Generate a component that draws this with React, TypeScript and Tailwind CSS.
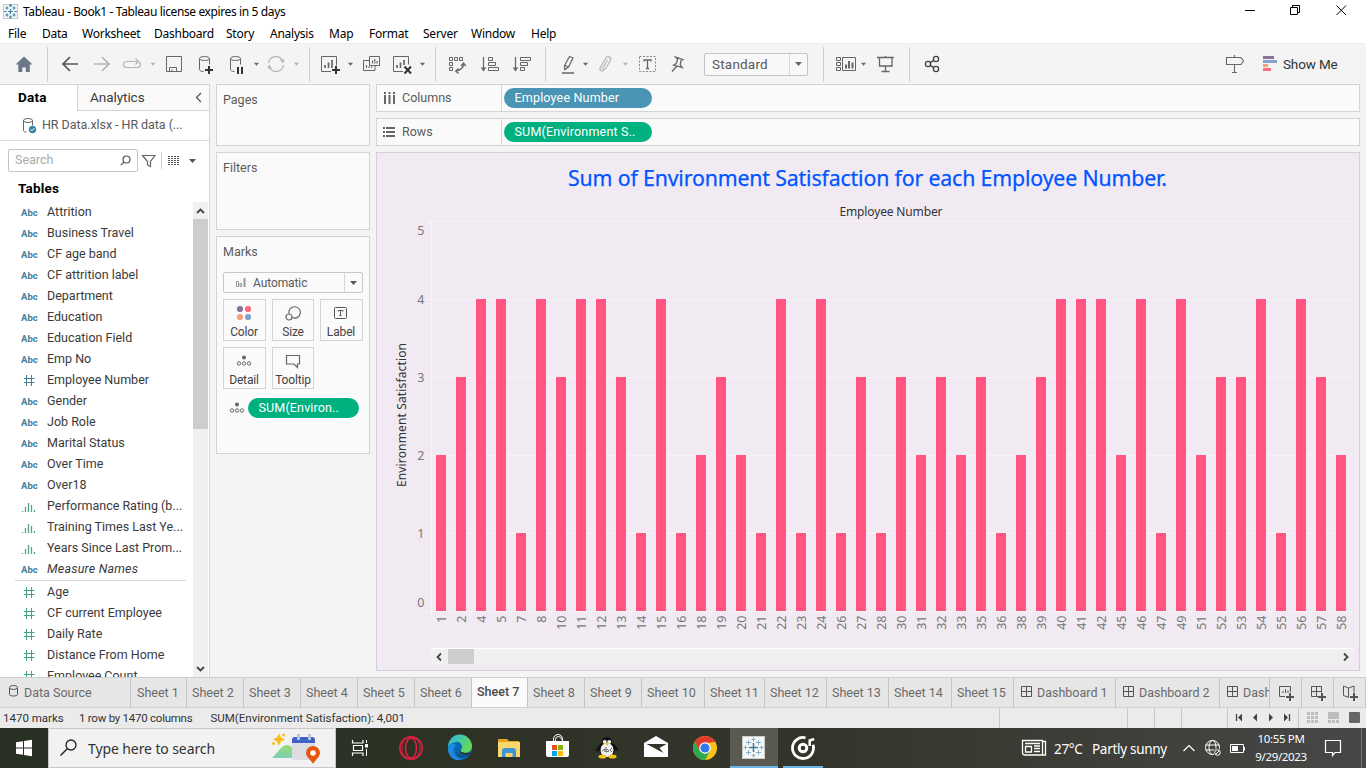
import React from 'react';

type IcoProps = { x: number; w: number; y?: number; h?: number; c?: string; children?: React.ReactNode };

/* Icon slot: the drawing inside uses window coordinates, the slot itself flows in its bar. */
function Ico({ x, w, y = 44, h = 40, c = '#666', children }: IcoProps) {
  return (
    <svg className="block shrink-0" width={w} height={h} viewBox={`${x} ${y} ${w} ${h}`} fill="none" stroke={c} strokeWidth="1">
      {children}
    </svg>
  );
}

const Caret = ({ x, y = 64, c = '#666' }: { x: number; y?: number; c?: string }) => (
  <path d={`M${x - 2.5} ${y - 1.2}h5l-2.500 3z`} fill={c} stroke="none" />
);

const Sep = () => <div className="h-[35px] w-px shrink-0 bg-[#d0d0d0]" />;

const menus: [string, string][] = [
  ['File', 'w-[34px]'], ['Data', 'w-[40px]'], ['Worksheet', 'w-[72px]'], ['Dashboard', 'w-[72px]'], ['Story', 'w-[44px]'],
  ['Analysis', 'w-[59px]'], ['Map', 'w-[40px]'], ['Format', 'w-[54px]'], ['Server', 'w-[48px]'], ['Window', 'w-[60px]'], ['Help', 'w-[40px]'],
];

function TitleBar() {
  return (
    <div className="flex h-[23px] bg-white pl-[3px]">
      <Ico x={3} y={0} w={20} h={23}>
        <rect x="3.500" y="4.500" width="14" height="14" fill="#f5f5f5" stroke="#c8c8c8" />
        <g stroke="#3f86a8" strokeWidth="1.200">
          <path d="M8 11.500h5M10.500 9v5M9 5.500h3M10.500 4v3M9 17h3M10.500 15.500v3M4 11.500h2.500M14.500 11.500h2.500M5.500 8h3M7 6.500v3M12.500 8h3M14 6.500v3M5.500 15h3M7 13.500v3M12.500 15h3M14 13.500v3" />
        </g>
      </Ico>
      <span className="font-[Noto_Sans] text-[12px] leading-[24px] tracking-[-0.38px] whitespace-nowrap text-black">Tableau - Book1 - Tableau license expires in 5 days</span>
      <div className="flex-1" />
      <Ico x={1236} y={0} w={130} h={23} c="#000">
        <path d="M1245 10.500h10M1290.500 7.500h7v7h-7zM1292.500 7.500v-2h7v7h-2M1336.500 5.500l9.500 9.500M1346 5.500l-9.500 9.500" />
      </Ico>
    </div>
  );
}

function MenuBar() {
  return (
    <div className="flex h-5 bg-white pl-2 font-[Noto_Sans] text-[12px] leading-[21px] tracking-[-0.24px] text-black">
      {menus.map(([m, w]) => <span key={m} className={`${w} whitespace-nowrap`}>{m}</span>)}
    </div>
  );
}

const Plus = ({ x, y = 70 }: { x: number; y?: number }) => <path d={`M${x - 4} ${y}h8M${x} ${y - 4}v8`} stroke="#333" strokeWidth="2" />;

const Cyl = ({ x }: { x: number }) => (
  <>
    <ellipse cx={x + 5} cy="58.500" rx="5" ry="2" />
    <path d={`M${x} 58.500v11c0 1 1.500 2 4 2M${x + 10} 58.500v6`} />
  </>
);

function Toolbar() {
  return (
    <div className="flex h-[41px] items-center border-t border-[#ececec] bg-[#f4f4f4]">
      <Ico x={0} w={47}><path d="M24 56.500l-8.500 8h2.800V72h4v-4.500h3.500V72h4v-7.500h2.800z" fill="#6b7887" stroke="none" /></Ico>
      <Sep />
      <Ico x={48} w={40} c="#555"><path d="M78 64H63M70 57l-7 7 7 7" strokeWidth="1.700" /></Ico>
      <Ico x={88} w={28} c="#b4b4b4"><path d="M94 64h15M102 57l7 7-7 7" strokeWidth="1.700" /></Ico>
      <Ico x={116} w={42} c="#b4b4b4">
        <path d="M132 61.500h-5.500a3 3 0 0 0 0 6h11a3 3 0 0 0 1.500-5.600M130 61.500h8M135.500 58.500l3 3-3 3" strokeWidth="1.200" /><Caret x={153} c="#b4b4b4" />
      </Ico>
      <Ico x={158} w={32}><path d="M166.500 56.500h15v15h-15zM169.500 71.500v-4h7v4M172 69.500v2" /></Ico>
      <Ico x={190} w={30}><Cyl x={199.5} /><Plus x={209} /></Ico>
      <Ico x={220} w={42}><Cyl x={230.5} /><path d="M238 67v7M242 67v7" stroke="#333" strokeWidth="2" /><Caret x={256.5} /></Ico>
      <Ico x={262} w={47} c="#b4b4b4">
        <path d="M268.500 63a7.500 7.500 0 0 1 14-2.500M283.500 65a7.500 7.500 0 0 1-14 2.500" strokeWidth="1.200" />
        <path d="M280 59.500h4.500l-1.500 4zM272 68.500h-4.500l1.500-4z" fill="#b4b4b4" stroke="none" /><Caret x={296.5} c="#b4b4b4" />
      </Ico>
      <Sep />
      <Ico x={310} w={44}>
        <path d="M331 71.500h-9.500v-15h15v9" /><path d="M325 68v-3M328.500 68v-5.500M332 68v-8" strokeWidth="1.700" /><Plus x={336} /><Caret x={350.5} />
      </Ico>
      <Ico x={354} w={34}>
        <path d="M369.500 60.500h-6v10h11.500v-4.500M369.500 56.500h10v9h-10z" /><path d="M366.500 68v-3M369 68v-2M371.500 68v-1.500M372.500 63.500v-3M374.800 63.500v-4.500M377 63.500v-2.500" strokeWidth="1.100" />
      </Ico>
      <Ico x={388} w={47}>
        <path d="M403 71.500h-9.500v-15h15v8" /><path d="M397 68v-3M400.500 68v-5.500M404 65v-5" strokeWidth="1.700" /><path d="M404.500 66.500l6.500 7M411 66.500l-6.500 7" stroke="#333" strokeWidth="2" /><Caret x={422.5} />
      </Ico>
      <Sep />
      <Ico x={436} w={38}>
        <path d="M449.500 57.500h3v3h-3zM454.500 57.500h3v3h-3zM459.500 57.500h3v3h-3zM449.500 62.500h3v3h-3zM449.500 67.500h3v3h-3z" /><path d="M463.500 63.500c.300 4-3 7-7.500 7.500M461 66l2.500-3 2.300 3M458.500 68.500l-2.800 2.700 3 2.300" strokeWidth="1.300" />
      </Ico>
      <Ico x={474} w={32}>
        <path d="M483.500 57v13" strokeWidth="1.200" /><path d="M480.700 67.500h5.600l-2.800 4z" fill="#666" stroke="none" /><path d="M488.500 57.500h4v3h-4zM488.500 62.500h7v3h-7zM488.500 67.500h10v3h-10z" />
      </Ico>
      <Ico x={506} w={39}>
        <path d="M515.500 57v13" strokeWidth="1.200" /><path d="M512.700 67.500h5.600l-2.800 4z" fill="#666" stroke="none" /><path d="M520.500 57.500h10v3h-10zM520.500 62.500h7v3h-7zM520.500 67.500h4v3h-4z" />
      </Ico>
      <Sep />
      <Ico x={546} w={46}>
        <path d="M569.500 56.500l3.500 1.500-4.500 9-3.500 2.500-.500-4zM565 65.500l3.500 1.500" strokeWidth="1.200" /><path d="M564 69.500l1.500-.500M562 73h12" strokeWidth="1.700" /><Caret x={585.5} />
      </Ico>
      <Ico x={592} w={40} c="#b4b4b4">
        <path d="M607.500 60l-4.500 7.500c-1 2 1.200 3 2.200 1.500l5-8c1.800-3.500-2.500-6-4.700-2.500l-5 8.500c-1.700 3.200 1.500 5.500 3.500 3" strokeWidth="1.200" /><Caret x={625.5} c="#b4b4b4" />
      </Ico>
      <Ico x={632} w={32}>
        <rect x="639.500" y="56.500" width="16" height="15" strokeDasharray="2 1.500" stroke="#888" /><path d="M644 61.500v-1.500h7v1.500M647.500 60v8.500M646 68.500h3" strokeWidth="1.300" />
      </Ico>
      <Ico x={664} w={40}>
        <path d="M675.500 57l7.500 2.500-2 1-.800 4 2 3-8.500-2.500 2.500-1.500 1.500-4zM676.500 66.500l-4.500 5" strokeWidth="1.300" />
      </Ico>
      <div className="flex h-[23px] w-[104px] items-center rounded-[2px] border border-[#c4c4c4] bg-[#f8f8f8]">
        <span className="w-[84px] pl-[7px] font-[Roboto] text-[13.5px] tracking-[0.2px] text-[#5a5a5a]">Standard</span>
        <div className="h-full w-px bg-[#d8d8d8]" />
        <svg className="ml-1" width="9" height="6" viewBox="0 0 9 6"><path d="M1 1h7L4.500 5z" fill="#666" /></svg>
      </div>
      <div className="w-[15px]" />
      <Sep />
      <Ico x={824} w={46}>
        <path d="M836.500 57.500h4v3h-4zM836.500 62.500h4v3h-4zM836.500 67.500h4v3h-4zM842.500 57.500h13v13h-13z" /><path d="M846 68.500v-4M849 68.500v-7.500M852.500 68.500v-6" strokeWidth="2" /><Caret x={863.5} />
      </Ico>
      <Ico x={870} w={39}>
        <path d="M877 57.500h17M885.500 56v2M879.500 57.500v8.500h12.500v-8.500M885.500 66v5.500M881.500 71.500h8" strokeWidth="1.300" />
      </Ico>
      <Sep />
      <Ico x={910} w={40} c="#444">
        <g strokeWidth="1.300"><circle cx="928" cy="64" r="2.600" /><circle cx="936" cy="59" r="2.600" /><circle cx="936" cy="69" r="2.600" /><path d="M930.200 62.600l3.600-2.200M930.200 65.400l3.600 2.200" /></g>
      </Ico>
      <div className="flex-1" />
      <Ico x={1222} w={38}><path d="M1226.500 57.500h14.500l2.500 3.500-2.500 3.500h-14.500zM1234.500 55v2.500M1234.500 64.500v8M1232 72.500h5" strokeWidth="1.100" /></Ico>
      <Ico x={1260} w={23} c="none">
        <path d="M1263 56h11v3h-11z" fill="#8b7297" /><path d="M1263 60h14v3h-14z" fill="#81a3cb" /><path d="M1263 64h5v3h-5z" fill="#f0a07c" /><path d="M1263 68h8v3h-8z" fill="#fb6b7f" />
      </Ico>
      <span className="w-[83px] font-[Roboto] text-[13.5px] tracking-[-0.15px] text-[#333]">Show Me</span>
    </div>
  );
}

const dims: [string, string][] = [
  ['abc', 'Attrition'], ['abc', 'Business Travel'], ['abc', 'CF age band'], ['abc', 'CF attrition label'], ['abc', 'Department'],
  ['abc', 'Education'], ['abc', 'Education Field'], ['abc', 'Emp No'], ['num', 'Employee Number'], ['abc', 'Gender'], ['abc', 'Job Role'],
  ['abc', 'Marital Status'], ['abc', 'Over Time'], ['abc', 'Over18'], ['bin', 'Performance Rating (b...'], ['bin', 'Training Times Last Ye...'],
  ['bin', 'Years Since Last Prom...'], ['abc', 'Measure Names'],
];
const measures = ['Age', 'CF current Employee', 'Daily Rate', 'Distance From Home', 'Employee Count'];

function FieldIcon({ kind, c }: { kind: string; c: string }) {
  if (kind === 'abc') return <span className="text-[9.5px] leading-[21px] font-bold text-[#42809a]">Abc</span>;
  if (kind === 'bin')
    return (
      <svg width="16" height="13" viewBox="0 0 16 13" stroke="#52a487"><path d="M1.500 11v1M4.500 7v5M7.500 3v9M10.500 5v7M13.500 10v2" strokeWidth="1.300" /></svg>
    );
  return (
    <svg width="16" height="13" viewBox="0 0 16 13" stroke={c}><path d="M5.500 1v11M10.500 1v11M3 4.500h10.500M3 8.500h10.500" /></svg>
  );
}

function Field({ kind, name, c }: { kind: string; name: string; c: string }) {
  return (
    <div className="flex h-[21px] shrink-0 items-center">
      <div className="flex w-[26px] shrink-0 items-center"><FieldIcon kind={kind} c={c} /></div>
      <span className={name === 'Measure Names' ? 'tracking-[0.2px] whitespace-nowrap italic' : 'whitespace-nowrap'}>{name}</span>
    </div>
  );
}

function DataPane() {
  return (
    <div className="flex h-full w-[210px] flex-col border-t border-r border-[#d4d4d4] bg-white font-[Roboto] text-[#3a3a3a]">
      <div className="flex h-[26px] shrink-0">
        <div className="w-[77px] pl-[18px] text-[13.5px] leading-[25px] font-bold tracking-[0.2px] text-black">Data</div>
        <div className="flex flex-1 items-center border-b border-l border-[#d4d4d4] bg-[#fafafa] pl-3 text-[13.5px] tracking-[-0.05px]">
          <span className="flex-1">Analytics</span>
          <svg className="mr-[7px]" width="7" height="11" viewBox="0 0 7 11" fill="none" stroke="#555" strokeWidth="1.300"><path d="M6 1L1.500 5.500 6 10" /></svg>
        </div>
      </div>
      <div className="flex h-[30px] shrink-0 items-center border-b border-[#dcdcdc] text-[12.5px] tracking-[-0.06px] text-[#5a5a5a]">
        <Ico x={0} y={111} w={42} h={29}>
          <ellipse cx="28" cy="120.500" rx="4.500" ry="2" /><path d="M23.500 120.500v10c0 1 1 1.500 3 1.500M32.500 120.500v5" />
          <circle cx="32.500" cy="129.500" r="3.700" fill="#3a83a4" stroke="none" /><path d="M30.700 129.500l1.300 1.300 2.300-2.600" stroke="#fff" />
        </Ico>
        HR Data.xlsx - HR data (...
      </div>
      <div className="flex h-[39px] shrink-0 items-center pl-2">
        <div className="flex h-[23px] w-[130px] items-center rounded-[2px] border border-[#c4c4c4] pl-1.5 text-[12.5px] text-[#aaa]">
          <span className="flex-1">Search</span>
          <svg className="mr-1.5" width="11" height="11" viewBox="0 0 11 11" fill="none" stroke="#555" strokeWidth="1.200"><circle cx="6.500" cy="4.500" r="3.500" /><path d="M4 7L.800 10.200" /></svg>
        </div>
        <Ico x={138} y={148} w={62} h={24}>
          <path d="M142.500 154.500h12.500l-4.500 6v5l-3 -1.500v-3.500z" strokeWidth="1.200" />
          <path d="M161.500 151v17" stroke="#d0d0d0" />
          <path d="M168 155.500h12M168 157.500h12M168 159.500h12M168 161.500h12M168 163.500h12" strokeDasharray="2 1" stroke="#555" />
          <path d="M189 158h7l-3.500 4z" fill="#555" stroke="none" />
        </Ico>
      </div>
      <div className="h-[22px] shrink-0 pl-[18px] text-[13.5px] leading-[17px] font-bold tracking-[0.2px] text-black">Tables</div>
      <div className="flex h-[475px] min-h-0">
        <div className="flex w-[193px] flex-col overflow-hidden text-[12.5px]">
          <div className="flex flex-col pl-[21px]">
            {dims.map(([k, n]) => <Field key={n} kind={k} name={n} c="#42809a" />)}
          </div>
          <div className="mr-[7px] ml-[15px] h-px shrink-0 bg-[#d8d8d8]" />
          <div className="flex flex-col pt-px pl-[21px]">
            {measures.map((n) => <Field key={n} kind="num" name={n} c="#3fa27f" />)}
          </div>
        </div>
        <div className="flex w-[15px] flex-col items-center justify-between bg-[#f0f0f0]">
          <svg width="15" height="17" viewBox="0 0 15 17" fill="none" stroke="#444" strokeWidth="1.800"><path d="M4 11l3.500-3.500L11 11" /></svg>
          <div className="h-[210px] w-full bg-[#cdcdcd]" />
          <div className="flex-1" />
          <svg width="15" height="17" viewBox="0 0 15 17" fill="none" stroke="#444" strokeWidth="1.800"><path d="M4 7l3.500 3.500L11 7" /></svg>
        </div>
      </div>
    </div>
  );
}

const DetailDots = () => (
  <svg width="16" height="12" viewBox="0 0 16 12" fill="none" stroke="#666"><circle cx="8" cy="2.500" r="2" fill="#666" stroke="none" /><circle cx="3" cy="8.500" r="1.700" /><circle cx="8" cy="8.500" r="1.700" /><circle cx="13" cy="8.500" r="1.700" /></svg>
);

function MarkButton({ label, wide, children }: { label: string; wide?: boolean; children: React.ReactNode }) {
  return (
    <div className={`flex h-[42px] flex-col items-center border border-[#d4d4d4] ${wide ? 'w-[43px] pr-px' : 'w-[42px]'}`}>
      <div className="flex h-[26px] items-center">{children}</div>
      <span className="text-[12px] leading-[13px] tracking-[-0.15px] whitespace-nowrap text-[#444]">{label}</span>
    </div>
  );
}

function Cards() {
  return (
    <div className="ml-1.5 flex w-[154px] flex-col gap-1.5 font-[Roboto] text-[12.5px] text-[#5a5a5a]">
      <div className="h-[62px] border border-[#d4d4d4] bg-[#fafafa] pl-1.5 leading-[30px]">Pages</div>
      <div className="h-[78px] border border-[#d4d4d4] bg-[#fafafa] pl-1.5 leading-[30px]">Filters</div>
      <div className="h-[218px] border border-[#d4d4d4] bg-[#fafafa] px-1.5">
        <div className="h-[35px] leading-[30px]">Marks</div>
        <div className="flex h-[21px] items-center rounded-[2px] border border-[#c8c8c8]">
          <svg className="ml-[11px]" width="12" height="11" viewBox="0 0 12 11" fill="none" stroke="#999"><path d="M1.500 4.500h2v5h-2zM5 6.500h1.500v3H5z" /><path d="M9.500 1v9" strokeWidth="2" /></svg>
          <span className="ml-1.5 w-[91px] text-[12px] tracking-[-0.1px]">Automatic</span>
          <div className="h-full w-px bg-[#d4d4d4]" />
          <svg className="ml-1" width="9" height="6" viewBox="0 0 9 6"><path d="M1 1h7L4.500 5z" fill="#555" /></svg>
        </div>
        <div className="mt-1.5 flex justify-between">
          <MarkButton label="Color" wide>
            <svg width="16" height="16" viewBox="0 0 16 16"><circle cx="4" cy="4" r="3.100" fill="#8b7297" /><circle cx="12" cy="4" r="3.100" fill="#fb6b7f" /><circle cx="4" cy="12" r="3.100" fill="#f0a07c" /><circle cx="12" cy="12" r="3.100" fill="#81a3cb" /></svg>
          </MarkButton>
          <MarkButton label="Size">
            <svg width="16" height="16" viewBox="0 0 16 16" fill="none" stroke="#666" strokeWidth="1.200"><path d="M4 8.500A5.700 5.700 0 1 1 7 12.500" /><circle cx="4" cy="12" r="3" /></svg>
          </MarkButton>
          <MarkButton label="Label" wide>
            <svg width="14" height="14" viewBox="0 0 14 14" fill="none" stroke="#555"><rect x=".500" y="1.500" width="12" height="11" rx="1" /><path d="M4 5.500v-1h5v1M6.500 4.500v5M5.500 9.500h2" /></svg>
          </MarkButton>
        </div>
        <div className="mt-1.5 flex gap-1.5">
          <MarkButton label="Detail" wide><DetailDots /></MarkButton>
          <MarkButton label="Tooltip">
            <svg width="16" height="15" viewBox="0 0 16 15" fill="none" stroke="#666" strokeWidth="1.200"><path d="M1.500 1.500h13v8.500h-2v3.500L9 10H1.500z" /></svg>
          </MarkButton>
        </div>
        <div className="mt-[9px] flex items-center pl-1.5">
          <DetailDots />
          <div className="ml-[3px] h-5 w-[111px] rounded-full bg-[#00b180] pl-[10.5px] text-[12.5px] leading-5 tracking-[0.15px] text-white">SUM(Environ..</div>
        </div>
      </div>
    </div>
  );
}

const data: [number, number][] = [
  [1, 2], [2, 3], [4, 4], [5, 4], [7, 1], [8, 4], [10, 3], [11, 4], [12, 4], [13, 3], [14, 1], [15, 4], [16, 1], [18, 2], [19, 3], [20, 2],
  [21, 1], [22, 4], [23, 1], [24, 4], [26, 1], [27, 3], [28, 1], [30, 3], [31, 2], [32, 3], [33, 2], [35, 3], [36, 1], [38, 2], [39, 3],
  [40, 4], [41, 4], [42, 4], [45, 2], [46, 4], [47, 1], [49, 4], [51, 2], [52, 3], [53, 3], [54, 4], [55, 1], [56, 4], [57, 3], [58, 2],
];

function Viz() {
  return (
    <div className="flex h-[519px] flex-col border border-[#d4d0d8] bg-[#f2eaf3]">
      <svg className="block" width="982" height="495" viewBox="377 153 982 495" fontFamily="'Noto Sans', sans-serif">
        <text x="568" y="186" fontSize="21.300" fill="#0055ff" stroke="#0055ff" strokeWidth=".25" textLength="599">Sum of Environment Satisfaction for each Employee Number.</text>
        <text x="839.500" y="216" fontSize="12" fill="#333" textLength="103">Employee Number</text>
        <text transform="translate(406 487) rotate(-90)" fontSize="12" fill="#333" textLength="144">Environment Satisfaction</text>
        {[0, 1, 2, 3, 4, 5].map((v) => (
          <g key={v}>
            <path d={`M426 ${611.5 - 78 * v}H1351`} stroke="#f7f2f8" />
            <text x="424.500" y={v === 0 ? 607 : v === 5 ? 235 : 615.5 - 78 * v} fontSize="12.500" fill="#777" textAnchor="end">{v}</text>
          </g>
        ))}
        <path d="M431.500 221v393" stroke="#f9f6fa" />
        {data.map(([n, v], i) => (
          <g key={n}>
            <path d={`M${451.5 + 20 * i} 611v3`} stroke="#f9f6fa" />
            <rect x={436 + 20 * i} y={611 - 78 * v} width="10" height={78 * v} fill="#ff5580" />
            <text transform={`translate(${446 + 20 * i} 615.5) rotate(-90)`} fontSize="12.500" fill="#777" textAnchor="end">{n}</text>
          </g>
        ))}
      </svg>
      <div className="mr-[5px] ml-[54px] flex h-[17px] border-t border-white bg-[#f0f0f0]">
        <svg width="17" height="16" viewBox="0 0 17 16" fill="none" stroke="#444" strokeWidth="1.800"><path d="M10 4.500L6.500 8l3.500 3.500" /></svg>
        <div className="h-[15px] w-[26px] bg-[#cdcdcd]" />
        <div className="flex-1" />
        <svg width="17" height="16" viewBox="0 0 17 16" fill="none" stroke="#444" strokeWidth="1.800"><path d="M7 4.500L10.500 8 7 11.500" /></svg>
      </div>
    </div>
  );
}

function Shelf({ label, pill, color, children }: { label: string; pill: string; color: string; children: React.ReactNode }) {
  return (
    <div className="flex h-7 border border-[#d4d4d4] bg-[#fafafa] font-[Roboto] text-[12.5px] text-[#5a5a5a]">
      <div className="flex w-[125px] items-center border-r border-[#d4d4d4] pl-1.5">
        <svg className="mr-[7px]" width="12" height="12" viewBox="0 0 12 12" stroke="#666" strokeWidth="2">{children}</svg>
        {label}
      </div>
      <div className={`mt-[3px] ml-0.5 h-5 w-[148px] rounded-full pl-[10.5px] text-[12.5px] leading-5 tracking-[0.18px] text-white ${color}`}>{pill}</div>
    </div>
  );
}

const sheets: [string, string][] = [
  ['Sheet 1', 'w-[56px] pl-[6px]'], ['Sheet 2', 'w-[57px] pl-[5px]'], ['Sheet 3', 'w-[57px] pl-[5px]'], ['Sheet 4', 'w-[57px] pl-[5px]'],
  ['Sheet 5', 'w-[57px] pl-[5px]'], ['Sheet 6', 'w-[57px] pl-[5px]'], ['Sheet 7', 'w-[56px] pl-[5px]'], ['Sheet 8', 'w-[57px] pl-[5px]'],
  ['Sheet 9', 'w-[57px] pl-[5px]'], ['Sheet 10', 'w-[63px] pl-[5px]'], ['Sheet 11', 'w-[60px] pl-[5px]'], ['Sheet 12', 'w-[62px] pl-[5px]'],
  ['Sheet 13', 'w-[62px] pl-[5px]'], ['Sheet 14', 'w-[63px] pl-[5px]'], ['Sheet 15', 'w-[62px] pl-[5px]'],
];
const dashboards: [string, string][] = [['Dashboard 1', 'w-[102px]'], ['Dashboard 2', 'w-[104px]'], ['Dashboard 3', 'w-[50px]']];

function SheetTabs() {
  return (
    <div className="flex h-[31px] border-y border-[#cfcfcf] bg-[#e6e6e6] font-[Roboto] text-[12.5px] leading-[30px] whitespace-nowrap text-[#6a6a6a]">
      <div className="flex w-[131px] border-r border-[#c4c4c4] pl-2">
        <svg className="mt-[6px] mr-[5px]" width="11" height="14" viewBox="0 0 11 14" fill="none" stroke="#555"><ellipse cx="5.500" cy="3.500" rx="4" ry="2" /><path d="M1.500 3.500v7c0 2 8 2 8 0v-7" /></svg>
        Data Source
      </div>
      {sheets.map(([s, w]) => (
        <div key={s} className={`${w} shrink-0 border-r border-[#c4c4c4] ${s === 'Sheet 7' ? 'bg-[#fafafa] leading-[28px] font-medium text-[#4a4a4a]' : ''}`}>{s}</div>
      ))}
      {dashboards.map(([s, w]) => (
        <div key={s} className={`${w} flex shrink-0 overflow-hidden border-r border-[#c4c4c4] pl-[7px]`}>
          <svg className="mt-2 mr-[5px] shrink-0" width="11" height="11" viewBox="0 0 11 11" fill="none" stroke="#555"><path d="M.500.500h10v10H.500zM5.500.500v10M.500 5.500h10" /></svg>
          {s}
        </div>
      ))}
      <div className="w-8 border-r border-[#c4c4c4]"><Ico x={1270} y={678} w={31} h={29} c="#555"><path d="M1285 696.500h-5.500v-10h11v5.500M1283 693v-2M1285.500 693v-4M1288 693v-2.500" /><path d="M1286 697h8M1290 693v8" strokeWidth="2" /></Ico></div>
      <div className="w-8 border-r border-[#c4c4c4]"><Ico x={1302} y={678} w={31} h={29} c="#555"><path d="M1318 696.500h-6.500v-10h10v6M1316.500 686.500v10M1311.500 691.500h10" /><path d="M1318 697h8M1322 693v8" strokeWidth="2" /></Ico></div>
      <div className="w-8 border-r border-[#c4c4c4]"><Ico x={1334} y={678} w={31} h={29} c="#555"><path d="M1349 697.500l-5.500-2v-9.500l5 2 5.500-2v6.500M1348.500 688v9" /><path d="M1350 697h8M1354 693v8" strokeWidth="2" /></Ico></div>
    </div>
  );
}

function StatusBar() {
  return (
    <div className="flex h-5 bg-[#ebebeb] font-[Roboto] text-[11.5px] leading-[21px] whitespace-nowrap text-[#333]">
      <span className="w-[76px] pl-[3px]">1470 marks</span>
      <span className="w-[132px] pl-[3px] tracking-[-0.25px]">1 row by 1470 columns</span>
      <span className="pl-[2.5px]">SUM(Environment Satisfaction): 4,001</span>
      <div className="flex-1" />
      <div className="w-[128px] border-l border-[#c8c8c8]" />
      <div className="w-[27px] border-l border-[#c8c8c8]" />
      <div className="w-[27px] border-l border-[#c8c8c8]" />
      <div className="w-[46px] border-l border-[#c8c8c8]" />
      <div className="flex border-l border-[#c8c8c8]">
        <Ico x={1228} y={708} w={70} h={20} c="#444">
          <path d="M1236.500 714v7M1289.500 714v7" strokeWidth="1.300" />
          <path d="M1242 713.500v8l-4-4zM1257 713.500v8l-4-4zM1269 713.500v8l4-4zM1284 713.500v8l4-4z" fill="#444" stroke="none" />
        </Ico>
      </div>
      <div className="flex border-l border-[#c8c8c8]">
        <Ico x={1299} y={708} w={67} h={20} c="none">
          <path d="M1307 712h3v3h-3zM1311 712h3v3h-3zM1315 712h3v3h-3zM1307 716h3v3h-3zM1311 716h3v3h-3zM1315 716h3v3h-3zM1307 720h3v3h-3zM1311 720h3v3h-3zM1315 720h3v3h-3zM1328 712h11v7h-11zM1328 720h3v3h-3zM1332 720h3v3h-3zM1336 720h3v3h-3z" fill="#bdbdbd" />
          <rect x="1349" y="712" width="11" height="11" rx="1" fill="#666" />
        </Ico>
      </div>
    </div>
  );
}

function TIco(p: { x: number; w: number; children?: React.ReactNode }) {
  return <Ico x={p.x} w={p.w} y={728} h={40} c="#fff">{p.children}</Ico>;
}

function Taskbar() {
  return (
    <div className="flex h-10 items-center bg-linear-to-r from-[#262f21] via-[#34352a] via-60% to-[#474747] font-[Noto_Sans] text-white">
      <TIco x={0} w={48}><path d="M16 742.200l7-1v6.300h-7zM24 741l8-1.200v7.700h-8zM16 748.500h7v6.300l-7-1zM24 748.500h8v7.700l-8-1.200z" fill="#fff" stroke="none" /></TIco>
      <div className="flex h-10 w-[288px] items-center border border-[#c8c8c8] bg-[#f2f2f2] text-[14px] tracking-[-0.1px] text-[#333]">
        <Ico x={49} y={729} w={39} h={38} c="#222"><circle cx="71" cy="745" r="5" strokeWidth="1.300" /><path d="M67.500 748.500l-7 7" strokeWidth="1.400" /></Ico>
        <span className="w-[174px] pt-px whitespace-nowrap">Type here to search</span>
        <Ico x={262} y={729} w={72} h={38} c="none">
          <defs><linearGradient id="hill" x1="0" y1="0" x2="0" y2="1"><stop offset="0" stopColor="#98dc72" /><stop offset="1" stopColor="#7dd0b4" /></linearGradient></defs>
          <path d="M272 758c4-3 9-13 15-13 5 0 8 8 10 13z" fill="url(#hill)" />
          <rect x="292" y="737" width="23" height="23" rx="3" fill="#dcdce2" />
          <path d="M292 743v-3q0-3 3-3h17q3 0 3 3v3z" fill="#3f62c8" /><path d="M297 734h3v6h-3zM308 734h3v6h-3z" fill="#b8c4e0" />
          <path d="M279 733.500l2 4 4 2-4 2-2 4-2-4-4-2 4-2z" fill="#fbbc1a" /><circle cx="283.500" cy="735" r="1.500" fill="#fbbc1a" /><circle cx="273.500" cy="743.500" r="1.500" fill="#fbbc1a" />
          <path d="M313 764c-2-4-7-7-7-11a7 7 0 0 1 14 0c0 4-5 7-7 11z" fill="#e8560e" /><circle cx="313" cy="753" r="2.800" fill="#fff" />
        </Ico>
      </div>
      <TIco x={336} w={48}>
        <path d="M352.500 740v3h10.500v-3M352.500 756v-3h10.500v3M353.500 745.500h9v5h-9z" strokeWidth="1.200" /><path d="M366.500 740v3M366.500 749v7" /><path d="M365 744h3v3.500h-3z" fill="#fff" stroke="none" />
      </TIco>
      <TIco x={384} w={50}><g stroke="#e0203f" strokeWidth="1.500"><circle cx="411" cy="748" r="11.200" /><ellipse cx="411" cy="748" rx="5.500" ry="10" /><path d="M414 738c8 2 8 18 0 20M408 738c-8 2-8 18 0 20" strokeWidth="1" /></g></TIco>
      <TIco x={434} w={50}>
        <defs><linearGradient id="edge" x1="0" y1="0" x2="1" y2="0.500"><stop offset="0" stopColor="#2cb4ee" /><stop offset="1" stopColor="#62dc58" /></linearGradient></defs>
        <g stroke="none"><circle cx="460" cy="748" r="12" fill="#0c69b4" /><path d="M448 747a12 12 0 0 1 24-1c0 5-4 7-8 7s-4-2-3-3c3-4-1-9-5-8s-7 2-8 5z" fill="url(#edge)" /><path d="M456 745c-5 4-2 13 6 14-9 4-15-5-14-12 2-4 5-4 8-2z" fill="#1b8be0" /><path d="M457 747c-3 6 5 11 13 7-4 5-17 6-13-7z" fill="#0d4f8c" /><path d="M459 749.500c1 2.500 5 4 10 3.500 2-.200 2.500-1 3-1.500-.500 1.500-1 2.500-2 2.500-5 2-11 0-11-4.500z" fill="#2e3325" /></g>
      </TIco>
      <TIco x={484} w={48}><g stroke="none"><path d="M498 739h9l2 2h10v16h-21z" fill="#e5a51c" /><path d="M498 742h22v15h-22z" fill="#fbd66c" /><path d="M502 757v-6q0-3 3-3h8q3 0 3 3v6h-3.500v-4h-7v4z" fill="#3b96d8" /></g></TIco>
      <TIco x={532} w={50}>
        <path d="M553.500 741v-2a4.500 4.500 0 0 1 9 0v2M555.500 741v-1.500a3 3 0 0 1 6 0" /><g stroke="none"><path d="M546 741h23v14q0 2-2 2h-19q-2 0-2-2z" fill="#fff" /><path d="M552 745h5v5h-5z" fill="#f04e1f" /><path d="M558 745h5v5h-5z" fill="#7fba00" /><path d="M552 751h5v5h-5z" fill="#00a4ef" /><path d="M558 751h5v5h-5z" fill="#ffb900" /></g>
      </TIco>
      <TIco x={582} w={48}>
        <g stroke="none"><path d="M607 737c4 0 5 3 5 6 4 2 6 5 6 8l-3-1-2 6h-12l-2-6-3 2c0-4 3-7 6-9 0-3 1-6 5-6z" fill="#111" /><ellipse cx="607" cy="750" rx="6.500" ry="7" fill="#f2f2f2" /><circle cx="604.800" cy="742" r="2" fill="#eee" /><circle cx="609.200" cy="742" r="2" fill="#eee" /><path d="M604.500 743h5l-2.500 3z" fill="#f6c414" /><ellipse cx="602.500" cy="756.500" rx="4" ry="2" fill="#f6c414" /><ellipse cx="612.500" cy="756.500" rx="4" ry="2" fill="#f6c414" /></g>
        <path d="M602 751l3-2v3M606 747v5l3-1-2-2M612 748l-2 2 2 2" stroke="#444" strokeWidth=".8" />
      </TIco>
      <TIco x={630} w={50}><path d="M644 743l12-7 12 7v14h-24zM646.500 744l17 9-4-5 7-4z" fill="#fff" fillRule="evenodd" stroke="none" /></TIco>
      <TIco x={680} w={50}>
        <g stroke="none"><circle cx="705" cy="748" r="12" fill="#fbc116" /><path d="M694.600 742a12 12 0 0 1 20.800 0L705 743l-5 8z" fill="#e33b2e" /><path d="M694.600 742A12 12 0 0 0 705 760l5-9-5 3-5-3z" fill="#2da94f" /><circle cx="705" cy="748" r="5.800" fill="#fff" /><circle cx="705" cy="748" r="4.600" fill="#2f78ee" /></g>
      </TIco>
      <div className="h-10 border-b-2 border-[#6cb4ec] bg-[#5b5a51]">
        <Ico x={730} y={728} w={48} h={38}>
          <rect x="742.500" y="736.500" width="22" height="22" fill="#f6f6f6" stroke="#ccc" />
          <g stroke="#7fb0c6"><path d="M749 747.500h9M753.500 743v9" strokeWidth="1.500" stroke="#397ea0" /><path d="M751.500 739.500h4M753.500 737.500v4M751.500 755.500h4M753.500 753.500v4M743.500 747.500h4M745.500 745.500v4M759.500 747.500h4M761.500 745.500v4M746 742.500h5M748.500 740v5M756 742.500h5M758.500 740v5M746 752.500h5M748.500 750v5M756 752.500h5M758.500 750v5" /></g>
        </Ico>
      </div>
      <div className="ml-[5px] h-10 border-b-2 border-[#6cb4ec]">
        <Ico x={783} y={728} w={40} h={38} c="#fff"><path d="M805.500 737.800a10.500 10.500 0 1 0 7.500 7" strokeWidth="2.800" /><circle cx="803" cy="748" r="3.800" strokeWidth="3" /><path d="M809.700 746v-5.500l4.500-1.500" strokeWidth="2.500" /></Ico>
      </div>
      <div className="flex-1" />
      <TIco x={1014} w={40}><g strokeWidth="1.300"><path d="M1042 741.500h3.500v13.500h-20.500q-2.500 0-2.500-2.500v-12h20v14.500M1034 748.500h6M1034 751.500h6M1025 743.500h15M1034 746h6" /><path d="M1025.500 746.500h6v5.500h-6z" /></g></TIco>
      <span className="w-[38px] pt-[2px] text-[13.5px] tracking-[-0.3px] whitespace-nowrap">27°C</span>
      <span className="w-[84px] pt-[2px] text-[13.5px] tracking-[-0.3px] whitespace-nowrap">Partly sunny</span>
      <TIco x={1176} w={78}>
        <path d="M1183.500 751l5.500-5.500 5.500 5.500" strokeWidth="1.200" />
        <circle cx="1212.500" cy="747.500" r="7" /><ellipse cx="1212.500" cy="747.500" rx="3.500" ry="7" /><path d="M1205.500 745h14M1205.500 750h14" /><circle cx="1217.500" cy="752.500" r="4" fill="#45453f" stroke="none" /><circle cx="1217.500" cy="752.500" r="2.800" /><path d="M1215.500 754.500l4-4" />
        <path d="M1230.500 744.500h13v8h-13zM1244.500 747v3.500" /><path d="M1232 746h6v5h-6z" fill="#fff" stroke="none" />
      </TIco>
      <div className="w-[54px] text-center text-[11.5px] leading-[18px] tracking-[-0.35px] whitespace-nowrap">
        <div>10:55 PM</div><div>9/29/2023</div>
      </div>
      <TIco x={1308} w={58}><path d="M1325.500 740.500h15v12h-5.500l-2.500 3v-3h-7z" strokeWidth="1.200" /><path d="M1361.500 728v40" stroke="#777" /></TIco>
    </div>
  );
}

export default function App() {
  return (
    <div className="flex h-[768px] w-[1366px] flex-col overflow-hidden bg-[#f4f4f4]">
      <TitleBar />
      <MenuBar />
      <Toolbar />
      <div className="flex h-[593px]">
        <DataPane />
        <Cards />
        <div className="ml-1.5 flex w-[984px] flex-col gap-1.5">
          <Shelf label="Columns" pill="Employee Number" color="bg-[#4995b3]"><path d="M2 0v12M6.500 0v12M11 0v12" strokeDasharray="2 1 9 0" /></Shelf>
          <Shelf label="Rows" pill="SUM(Environment S.." color="bg-[#00b180]"><path d="M0 2h12M0 6h12M0 10h12" strokeDasharray="2 1 9 0" /></Shelf>
          <Viz />
        </div>
      </div>
      <SheetTabs />
      <StatusBar />
      <Taskbar />
    </div>
  );
}
